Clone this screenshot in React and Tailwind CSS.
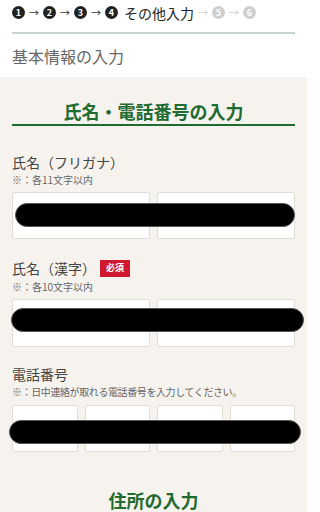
import React from 'react';

// Step indicator + contact form (name / phone) on a beige panel.
const font = { fontFamily: '"Noto Sans CJK JP", "Noto Sans", sans-serif' };

function StepDot({ n, done = true }) {
  return (
    <span
      className={[
        'flex h-[13px] w-[13px] shrink-0 items-center justify-center rounded-full text-[9px] font-bold leading-none text-white',
        done ? 'bg-[#222]' : 'bg-[#cfcfcf]',
      ].join(' ')}
    >
      {n}
    </span>
  );
}

function Arrow({ done = true }) {
  return (
    <span
      className={[
        'mx-[4px] text-[10px] leading-none',
        done ? 'text-[#333]' : 'text-[#cfcfcf]',
      ].join(' ')}
    >
      →
    </span>
  );
}

function Box() {
  return <div className="h-full rounded-[2px] border border-[#e2ddd5] bg-white" />;
}

// redaction bar laid over the inputs
function Redact({ className }) {
  return (
    <div
      className={[
        'absolute rounded-full border border-[#555] bg-black',
        className,
      ].join(' ')}
    />
  );
}

export default function App() {
  return (
    <div className="h-[512px] w-[307px] overflow-hidden bg-white text-[#333]" style={font}>
      {/* progress */}
      <div className="flex h-[24px] items-center px-3 pt-[1px]">
        <StepDot n="1" />
        <Arrow />
        <StepDot n="2" />
        <Arrow />
        <StepDot n="3" />
        <Arrow />
        <StepDot n="4" />
        <span className="ml-[6px] text-[14px] leading-none text-[#222]">その他入力</span>
        <Arrow done={false} />
        <StepDot n="5" done={false} />
        <Arrow done={false} />
        <StepDot n="6" done={false} />
      </div>
      <div className="mx-3 mt-[8px] h-[2px] bg-[#c8d2d1]" />
      <div className="flex h-[43px] items-center px-3 text-[16px] text-[#666]">
        基本情報の入力
      </div>

      <section className="h-[435px] bg-[#f6f3ee] px-3">
        <h2 className="pt-[22px] text-center text-[18px] font-bold leading-[24px] text-[#1f6b31]">
          氏名・電話番号の入力
        </h2>
        <div className="mt-[1px] h-[2px] bg-[#1f6b31]" />

        {/* furigana */}
        <div className="mt-[26px] text-[14px] leading-[20px] text-[#444]">氏名（フリガナ）</div>
        <div className="mt-[1px] text-[10px] leading-[14px] text-[#666]">※：各11文字以内</div>
        <div className="relative mt-[5px]">
          <div className="grid h-[47px] grid-cols-2 gap-[7px]">
            <Box />
            <Box />
          </div>
          <Redact className="left-[3px] right-0 top-[11px] h-[24px]" />
        </div>

        {/* kanji */}
        <div className="mt-[19px] flex items-center text-[14px] leading-[20px] text-[#444]">
          氏名（漢字）
          <span className="ml-[4px] flex h-[17px] w-[30px] items-center justify-center bg-[#d0192f] text-[9px] font-bold text-white">
            必須
          </span>
        </div>
        <div className="mt-[2px] text-[10px] leading-[14px] text-[#666]">※：各10文字以内</div>
        <div className="relative mt-[5px]">
          <div className="grid h-[48px] grid-cols-2 gap-[7px]">
            <Box />
            <Box />
          </div>
          <Redact className="-left-[1px] -right-[9px] top-[9px] h-[24px]" />
        </div>

        {/* phone */}
        <div className="mt-[17px] text-[14px] leading-[20px] text-[#444]">電話番号</div>
        <div className="mt-[1px] text-[10px] leading-[14px] tracking-[-0.4px] text-[#666]">
          ※：日中連絡が取れる電話番号を入力してください。
        </div>
        <div className="relative mt-[6px]">
          <div className="grid h-[47px] grid-cols-4 gap-[7px]">
            <Box />
            <Box />
            <Box />
            <Box />
          </div>
          <Redact className="-left-[3px] -right-[6px] top-[15px] h-[24px]" />
        </div>

        <h2 className="mt-[36px] text-center text-[18px] font-bold leading-[24px] text-[#1f6b31]">
          住所の入力
        </h2>
      </section>
    </div>
  );
}
